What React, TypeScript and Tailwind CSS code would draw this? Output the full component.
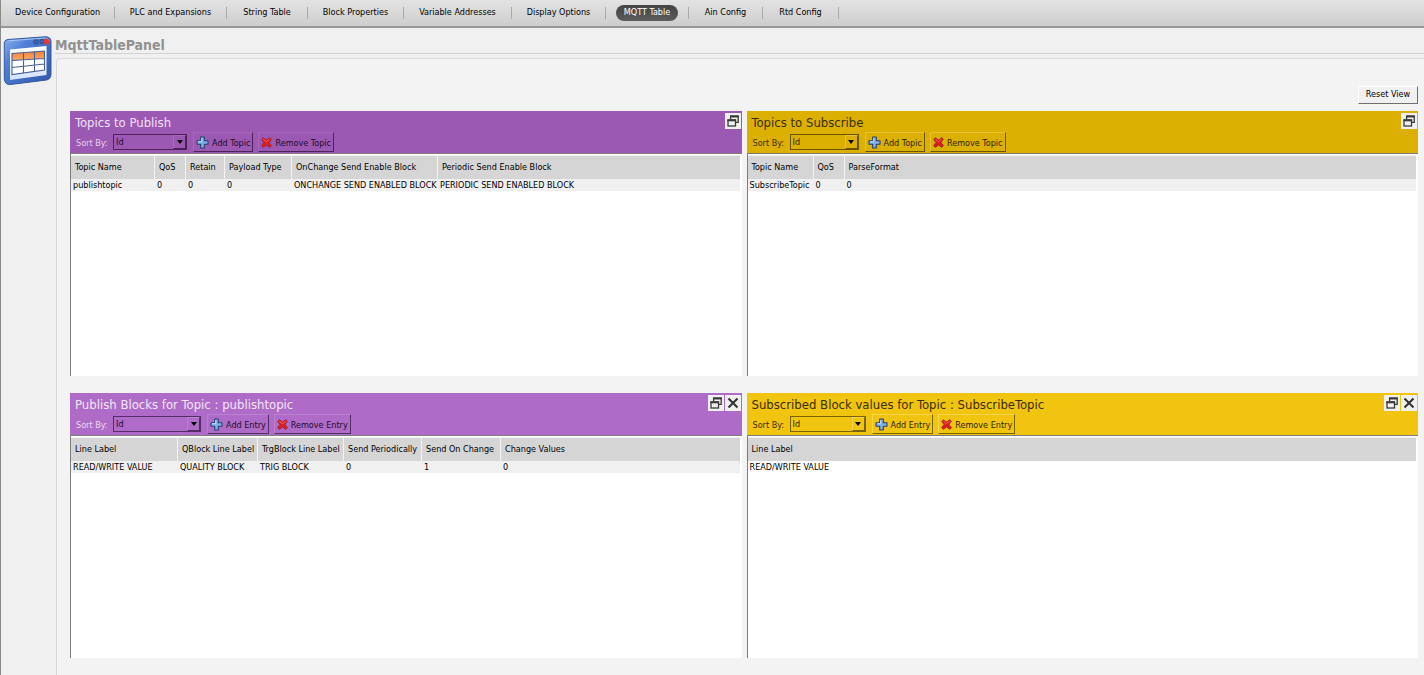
import type { ReactNode } from "react";

const tabs = [
  { label: "Device Configuration", width: "w-[114px]" },
  { label: "PLC and Expansions", width: "w-[112px]" },
  { label: "String Table", width: "w-[81px]" },
  { label: "Block Properties", width: "w-[96px]" },
  { label: "Variable Addresses", width: "w-[108px]" },
  { label: "Display Options", width: "w-[94px]" },
  { label: "MQTT Table", width: "w-[83px]", active: true },
  { label: "Ain Config", width: "w-[74px]" },
  { label: "Rtd Config", width: "w-[76px]" },
];

type Column = { title: string; width?: string };

type PanelProps = {
  id: string;
  title: string;
  item: string;
  header: string;
  titleColor: string;
  labelColor: string;
  textColor: string;
  edge: string;
  selectStyle: string;
  closable?: boolean;
  striped?: boolean;
  columns: Column[];
  row: string[];
};

const panels: PanelProps[] = [
  {
    id: "publish",
    title: "Topics to Publish",
    item: "Topic",
    header: "bg-[#9b59b3]",
    titleColor: "text-[#f0e2f4]",
    labelColor: "text-[#e6d2ee]",
    textColor: "text-[#1f0b2c]",
    edge: "border-t-[#a868be] border-l-[#a868be] border-r-[#4b2359] border-b-[#4b2359]",
    selectStyle: "w-[74px] border-[#4b2359]",
    striped: true,
    columns: [
      { title: "Topic Name", width: "w-[84px]" },
      { title: "QoS", width: "w-[31px]" },
      { title: "Retain", width: "w-[39px]" },
      { title: "Payload Type", width: "w-[67px]" },
      { title: "OnChange Send Enable Block", width: "w-[146px]" },
      { title: "Periodic Send Enable Block" },
    ],
    row: ["publishtopic", "0", "0", "0", "ONCHANGE SEND ENABLED BLOCK", "PERIODIC SEND ENABLED BLOCK"],
  },
  {
    id: "subscribe",
    title: "Topics to Subscribe",
    item: "Topic",
    header: "bg-[#dcb000]",
    titleColor: "text-[#3a2e00]",
    labelColor: "text-[#3a2e00]",
    textColor: "text-[#2e2400]",
    edge: "border-t-[#e6c234] border-l-[#e6c234] border-r-[#695400] border-b-[#695400]",
    selectStyle: "w-[69px] border-[#695400]",
    striped: true,
    columns: [
      { title: "Topic Name", width: "w-[66px]" },
      { title: "QoS", width: "w-[31px]" },
      { title: "ParseFormat" },
    ],
    row: ["SubscribeTopic", "0", "0"],
  },
  {
    id: "publish-blocks",
    title: "Publish Blocks for Topic : publishtopic",
    item: "Entry",
    header: "bg-[#ae6cc8]",
    titleColor: "text-[#f3e6f8]",
    labelColor: "text-[#ecd9f4]",
    textColor: "text-[#1f0b2c]",
    edge: "border-t-[#bb80d2] border-l-[#bb80d2] border-r-[#552d66] border-b-[#552d66]",
    selectStyle: "w-[88px] border-[#552d66]",
    closable: true,
    striped: true,
    columns: [
      { title: "Line Label", width: "w-[107px]" },
      { title: "QBlock Line Label", width: "w-[80px]" },
      { title: "TrgBlock Line Label", width: "w-[86px]" },
      { title: "Send Periodically", width: "w-[78px]" },
      { title: "Send On Change", width: "w-[79px]" },
      { title: "Change Values" },
    ],
    row: ["READ/WRITE VALUE", "QUALITY BLOCK", "TRIG BLOCK", "0", "1", "0"],
  },
  {
    id: "subscribed-values",
    title: "Subscribed Block values for Topic : SubscribeTopic",
    item: "Entry",
    header: "bg-[#f1c40f]",
    titleColor: "text-[#3a2e00]",
    labelColor: "text-[#3a2e00]",
    textColor: "text-[#2e2400]",
    edge: "border-t-[#f6d54a] border-l-[#f6d54a] border-r-[#7a6200] border-b-[#7a6200]",
    selectStyle: "w-[76px] border-[#7a6200]",
    closable: true,
    columns: [{ title: "Line Label" }],
    row: ["READ/WRITE VALUE"],
  },
];

function WindowTableIcon() {
  return (
    <svg width="50" height="50" viewBox="0 0 50 50" aria-hidden="true">
      <defs>
        <linearGradient id="frame" x1="0" y1="0" x2="1" y2="1">
          <stop offset="0" stopColor="#8db2ee" />
          <stop offset="0.3" stopColor="#4f80d6" />
          <stop offset="1" stopColor="#2f55a8" />
        </linearGradient>
        <linearGradient id="head" x1="0" y1="0" x2="0" y2="1">
          <stop offset="0" stopColor="#f08334" />
          <stop offset="1" stopColor="#fba86a" />
        </linearGradient>
        <linearGradient id="page" x1="0" y1="0" x2="0" y2="1">
          <stop offset="0" stopColor="#ffffff" />
          <stop offset="1" stopColor="#d3e2fa" />
        </linearGradient>
      </defs>
      <path d="M5 3.500 L42 .8 Q47.500 .5 48 5 V38 Q48 43 43.500 44 L7.500 48.500 Q2 49 1.300 43 V8 Q1 4 5 3.500Z" fill="url(#frame)" stroke="#3458a0" strokeWidth="1" />
      <path d="M5.500 4.800 L42.500 2 Q46 2 46.500 5" fill="none" stroke="#a9c6f5" strokeWidth="1" />
      <path d="M7 13.500 L43.500 10 V39 L7 44Z" fill="url(#page)" />
      <path d="M9 17.500 L41.500 15 V22.500 L9 24.500Z" fill="url(#head)" />
      <path d="M9 24.500 L41.500 22.500 V34 L9 38.500Z" fill="#fff" />
      <path d="M9 17.500 L41.500 15 V34 L9 38.500Z M9 24.500 L41.500 22.500 M9 31.500 L41.500 28 M20.500 16.500 V37 M31.500 15.700 V35.500" fill="none" stroke="#4a5f96" strokeWidth="1.100" />
      <rect x="31" y="4" width="4" height="4" rx="1" fill="#3a64b8" stroke="#2c4f98" />
      <rect x="37" y="3.500" width="4" height="4" rx="1" fill="#3a64b8" stroke="#2c4f98" />
      <circle cx="43.700" cy="5.500" r="2.900" fill="#e23b3b" />
    </svg>
  );
}

function PlusIcon() {
  return (
    <svg width="13" height="13" viewBox="0 0 13 13" className="shrink-0" aria-hidden="true">
      <path d="M4.700 1h3.600v3.700H12v3.600H8.300V12H4.700V8.300H1V4.700h3.700Z" fill="#7fb0ea" stroke="#27406f" strokeWidth="1.100" strokeLinejoin="round" />
      <path d="M5.700 2.200v3.500H2.200" fill="none" stroke="#c4def9" />
    </svg>
  );
}

function CrossIcon() {
  return (
    <svg width="11" height="11" viewBox="0 0 11 11" className="shrink-0" aria-hidden="true">
      <path d="M2.200.8 5.500 3 8.800.6l1.500 1.700L8 5.500l2.500 3.200-1.800 1.700L5.500 8 2.400 10.400.6 8.700 3 5.500.7 2.600Z" fill="#d92121" stroke="#a51616" strokeWidth=".7" strokeLinejoin="round" />
      <path d="M2.200 2.300 5.500 4.600 8.800 2" fill="none" stroke="#f26a5a" strokeWidth=".9" />
    </svg>
  );
}

function RestoreIcon() {
  return (
    <svg width="12" height="12" viewBox="0 0 12 12" aria-hidden="true">
      <path d="M3.600 4V1.500h7.600v5.800H8.500" fill="none" stroke="#3a3a3a" strokeWidth="1.300" />
      <path d="M3 1.300H11.800" stroke="#3a3a3a" strokeWidth="2" />
      <rect x="1" y="5" width="7.500" height="6" fill="#f0f0f0" stroke="#3a3a3a" strokeWidth="1.300" />
      <path d="M.4 5.300H9.100" stroke="#3a3a3a" strokeWidth="2" />
    </svg>
  );
}

function CloseIcon() {
  return (
    <svg width="12" height="12" viewBox="0 0 12 12" aria-hidden="true">
      <path d="M1.500 1.500 10.500 10.500M10.500 1.500 1.500 10.500" stroke="#333" strokeWidth="2.100" />
    </svg>
  );
}

function WindowButton({ label, children }: { label: string; children: ReactNode }) {
  return (
    <button type="button" aria-label={label} className="flex size-4 items-center justify-center bg-[#f0f0f0]">
      {children}
    </button>
  );
}

function Panel(props: PanelProps) {
  const { id, title, item, header, titleColor, labelColor, textColor, edge, selectStyle, closable, striped, columns, row } = props;
  const button = `flex h-5 items-center gap-[3px] border px-[2px] leading-3 whitespace-nowrap ${edge} ${textColor}`;

  return (
    <section className="flex min-w-0 flex-col">
      <header className={`flex h-[42px] justify-between ${header}`}>
        <div className="pt-[3px] pl-[5px]">
          <h2 className={`text-[13px] leading-[18px] ${titleColor}`}>{title}</h2>
          <div className="flex items-center">
            <label htmlFor={`${id}-sort`} className={`w-[38px] pt-[2px] pl-px leading-3 whitespace-nowrap ${labelColor}`}>
              Sort By:
            </label>
            <div className={`relative mr-[6px] h-4 border ${selectStyle}`}>
              <select id={`${id}-sort`} className={`block size-full appearance-none pl-[2px] leading-3 ${textColor}`}>
                <option>Id</option>
                <option>Name</option>
              </select>
              <span className={`pointer-events-none absolute top-0 right-0 flex h-[14px] w-[13px] items-center justify-center border ${edge}`}>
                <svg width="6" height="4" viewBox="0 0 6 4" aria-hidden="true">
                  <path d="M0 0H6L3 4Z" fill="#000" />
                </svg>
              </span>
            </div>
            <div className="flex gap-[5px]">
              <button type="button" className={button}>
                <PlusIcon />
                <span className="pt-[2px]">Add {item}</span>
              </button>
              <button type="button" className={button}>
                <CrossIcon />
                <span className="pt-[2px]">Remove {item}</span>
              </button>
            </div>
          </div>
        </div>
        <div className="flex gap-px pt-[2px] pr-px">
          <WindowButton label="Restore">
            <RestoreIcon />
          </WindowButton>
          {closable && (
            <WindowButton label="Close">
              <CloseIcon />
            </WindowButton>
          )}
        </div>
      </header>
      <div className="flex-1 border-t border-l border-[#7d7d7d] bg-white pt-px pr-[2px]">
        <table className="w-full table-fixed border-separate border-spacing-0 text-left whitespace-nowrap text-black">
          <thead>
            <tr className="h-6 bg-[#d5d5d5]">
              {columns.map((column, i) => (
                <th
                  key={column.title}
                  className={`border-t border-[#f3f3f3] p-0 pl-1 font-normal ${column.width ?? ""} ${i < columns.length - 1 ? "border-r" : ""}`}
                >
                  {column.title}
                </th>
              ))}
            </tr>
          </thead>
          <tbody>
            <tr className={striped ? "h-3 bg-[#f0f0f0]" : "h-3"}>
              {row.map((value, i) => (
                <td key={i} className="p-0 pl-[2px] leading-3">
                  {value}
                </td>
              ))}
            </tr>
          </tbody>
        </table>
      </div>
    </section>
  );
}

export default function App() {
  return (
    <div className="flex min-h-screen flex-col border-l border-[#8a8a8a] bg-[#f0f0f0] font-['DejaVu_Sans_Condensed','DejaVu_Sans',sans-serif] text-[9px]">
      <nav className="flex h-7 items-center border-b-2 border-[#989898] bg-linear-to-b from-[#e3e3e3] to-[#cdcdcd]">
        {tabs.map((tab) => (
          <div key={tab.label} className={`flex h-3 items-center justify-center border-r border-[#a9a9a9] ${tab.width}`}>
            <button
              type="button"
              className={
                tab.active
                  ? "h-4 rounded-full bg-linear-to-b from-[#444] to-[#5c5c5c] px-2 whitespace-nowrap text-white"
                  : "whitespace-nowrap text-black"
              }
            >
              {tab.label}
            </button>
          </div>
        ))}
      </nav>

      <div className="flex flex-1">
        <aside className="w-[54px] shrink-0 pt-2 pl-[2px]">
          <WindowTableIcon />
        </aside>
        <main className="flex min-w-0 flex-1 flex-col">
          <h1 className="h-[26px] border-b border-[#d2d2d2] pt-2 text-[14px] leading-[18px] font-bold text-[#919191]">MqttTablePanel</h1>
          <div className="mt-1 ml-px flex flex-1 flex-col rounded-tl-sm border-t border-l border-[#d8d8d8] bg-[#f3f3f3] pt-[27px] pr-[6px] pb-[17px] pl-[13px]">
            <button
              type="button"
              className="h-[18px] w-[60px] self-end border border-t-white border-r-[#6f6f6f] border-b-[#6f6f6f] border-l-white bg-[#f0f0f0] whitespace-nowrap text-black"
            >
              Reset View
            </button>
            <div className="mt-[7px] grid flex-1 auto-rows-fr grid-cols-2 gap-x-[5px] gap-y-[17px]">
              {panels.map((panel) => (
                <Panel key={panel.id} {...panel} />
              ))}
            </div>
          </div>
        </main>
      </div>
    </div>
  );
}
